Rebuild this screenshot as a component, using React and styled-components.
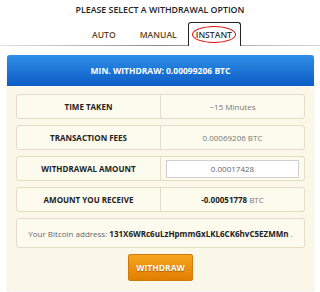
import styled, { createGlobalStyle } from 'styled-components';

const GlobalStyle = createGlobalStyle`
  html, body {
    margin: 0;
    padding: 0;
    background: #ffffff;
    font-family: "Open Sans", "Liberation Sans", sans-serif;
  }
`;

const Page = styled.div`
  width: 320px;
  height: 292px;
  overflow: hidden;
`;

const Title = styled.div`
  height: 20px;
  padding-top: 1px;
  text-align: center;
  font-size: 8.8px;
  font-weight: 600;
  line-height: 18px;
  color: #222;
`;

const TabBar = styled.div`
  display: flex;
  align-items: flex-end;
  height: 24px;
  padding-left: 78px;
  border-bottom: 1px solid transparent;
  border-image: linear-gradient(to right, #e4e4e4, #8a8a8a 50%, #d8d8d8) 1;
`;

const Tab = styled.div`
  position: relative;
  height: 23px;
  padding: 0 ${(p) => p.$right}px 0 ${(p) => p.$left}px;
  display: flex;
  align-items: center;
  font-size: 8.6px;
  font-weight: 600;
  color: ${(p) => (p.$active ? '#333' : '#5b4420')};
  background: ${(p) => (p.$active ? '#fff' : 'transparent')};
  border: 1px solid ${(p) => (p.$active ? '#222' : 'transparent')};
  border-bottom: none;
  border-radius: 3px 3px 0 0;
  margin-bottom: -1px;
`;

const Ring = styled.span`
  position: absolute;
  left: 3px;
  right: 4px;
  top: 3px;
  bottom: 3px;
  border: 1px solid #e01010;
  border-radius: 50%;
`;

const Panel = styled.div`
  margin: 9px 6px 0 7px;
  border-radius: 3px;
  background: #fcf8e9;
  box-shadow: 0 0 1px #bdb6a0;
  padding-bottom: 10px;
`;

const Header = styled.div`
  height: 31px;
  display: flex;
  align-items: center;
  justify-content: center;
  background: linear-gradient(#2f8fe6, #0d5cc6);
  border-radius: 3px 3px 0 0;
  color: #fff;
  font-size: 8.5px;
  font-weight: 700;
`;

const Body = styled.div`
  padding: 8px 9px 0 9px;
  display: flex;
  flex-direction: column;
  gap: 6px;
`;

const Row = styled.div`
  display: grid;
  grid-template-columns: 144px 1fr;
  height: 25px;
  border: 1px solid #e3ddc7;
  border-radius: 3px;
  background: #fdfaee;
  box-sizing: border-box;
`;

const Label = styled.div`
  display: flex;
  align-items: center;
  justify-content: center;
  border-right: 1px solid #e3ddc7;
  font-size: 8px;
  font-weight: 700;
  color: #222;
`;

const Value = styled.div`
  display: flex;
  align-items: center;
  justify-content: center;
  font-size: 8px;
  color: #777;
  padding: 0 5px;
`;

const Strong = styled.b`
  color: #222;
  font-weight: 700;
  margin-right: 2px;
`;

const Input = styled.div`
  width: 100%;
  height: 18px;
  box-sizing: border-box;
  background: #fff;
  border: 1px solid #cfcfcf;
  display: flex;
  align-items: center;
  justify-content: center;
  font-size: 8px;
  color: #666;
`;

const Address = styled.div`
  height: 30px;
  border: 1px solid #e3ddc7;
  border-radius: 3px;
  background: #fdfaee;
  box-sizing: border-box;
  display: flex;
  align-items: center;
  justify-content: center;
  font-size: 8px;
  color: #666;
`;

const ButtonRow = styled.div`
  display: flex;
  justify-content: center;
`;

const Button = styled.button`
  width: 65px;
  height: 27px;
  border: 1px solid #d17a08;
  border-radius: 2px;
  background: linear-gradient(#f7a51e, #e07f00);
  color: #fff;
  font-family: inherit;
  font-size: 8.5px;
  font-weight: 700;
  text-shadow: 0 1px 1px rgba(0, 0, 0, 0.35);
  padding: 0;
`;

const App = () => {
  return (
    <Page>
      <GlobalStyle />
      <Title>PLEASE SELECT A WITHDRAWAL OPTION</Title>
      <TabBar>
        <Tab $left={13} $right={11}>AUTO</Tab>
        <Tab $left={11} $right={10}>MANUAL</Tab>
        <Tab $active $left={7} $right={8}>
          INSTANT
          <Ring />
        </Tab>
      </TabBar>
      <Panel>
        <Header>MIN. WITHDRAW: 0.00099206 BTC</Header>
        <Body>
          <Row>
            <Label>TIME TAKEN</Label>
            <Value>~15 Minutes</Value>
          </Row>
          <Row>
            <Label>TRANSACTION FEES</Label>
            <Value>0.00069206 BTC</Value>
          </Row>
          <Row>
            <Label>WITHDRAWAL AMOUNT</Label>
            <Value>
              <Input>0.00017428</Input>
            </Value>
          </Row>
          <Row>
            <Label>AMOUNT YOU RECEIVE</Label>
            <Value>
              <Strong>-0.00051778</Strong> BTC
            </Value>
          </Row>
          <Address>
            Your Bitcoin address:&nbsp;<Strong>131X6WRc6uLzHpmmGxLKL6CK6hvC5EZMMn</Strong>.
          </Address>
          <ButtonRow>
            <Button>WITHDRAW</Button>
          </ButtonRow>
        </Body>
      </Panel>
    </Page>
  );
};

export default App;
